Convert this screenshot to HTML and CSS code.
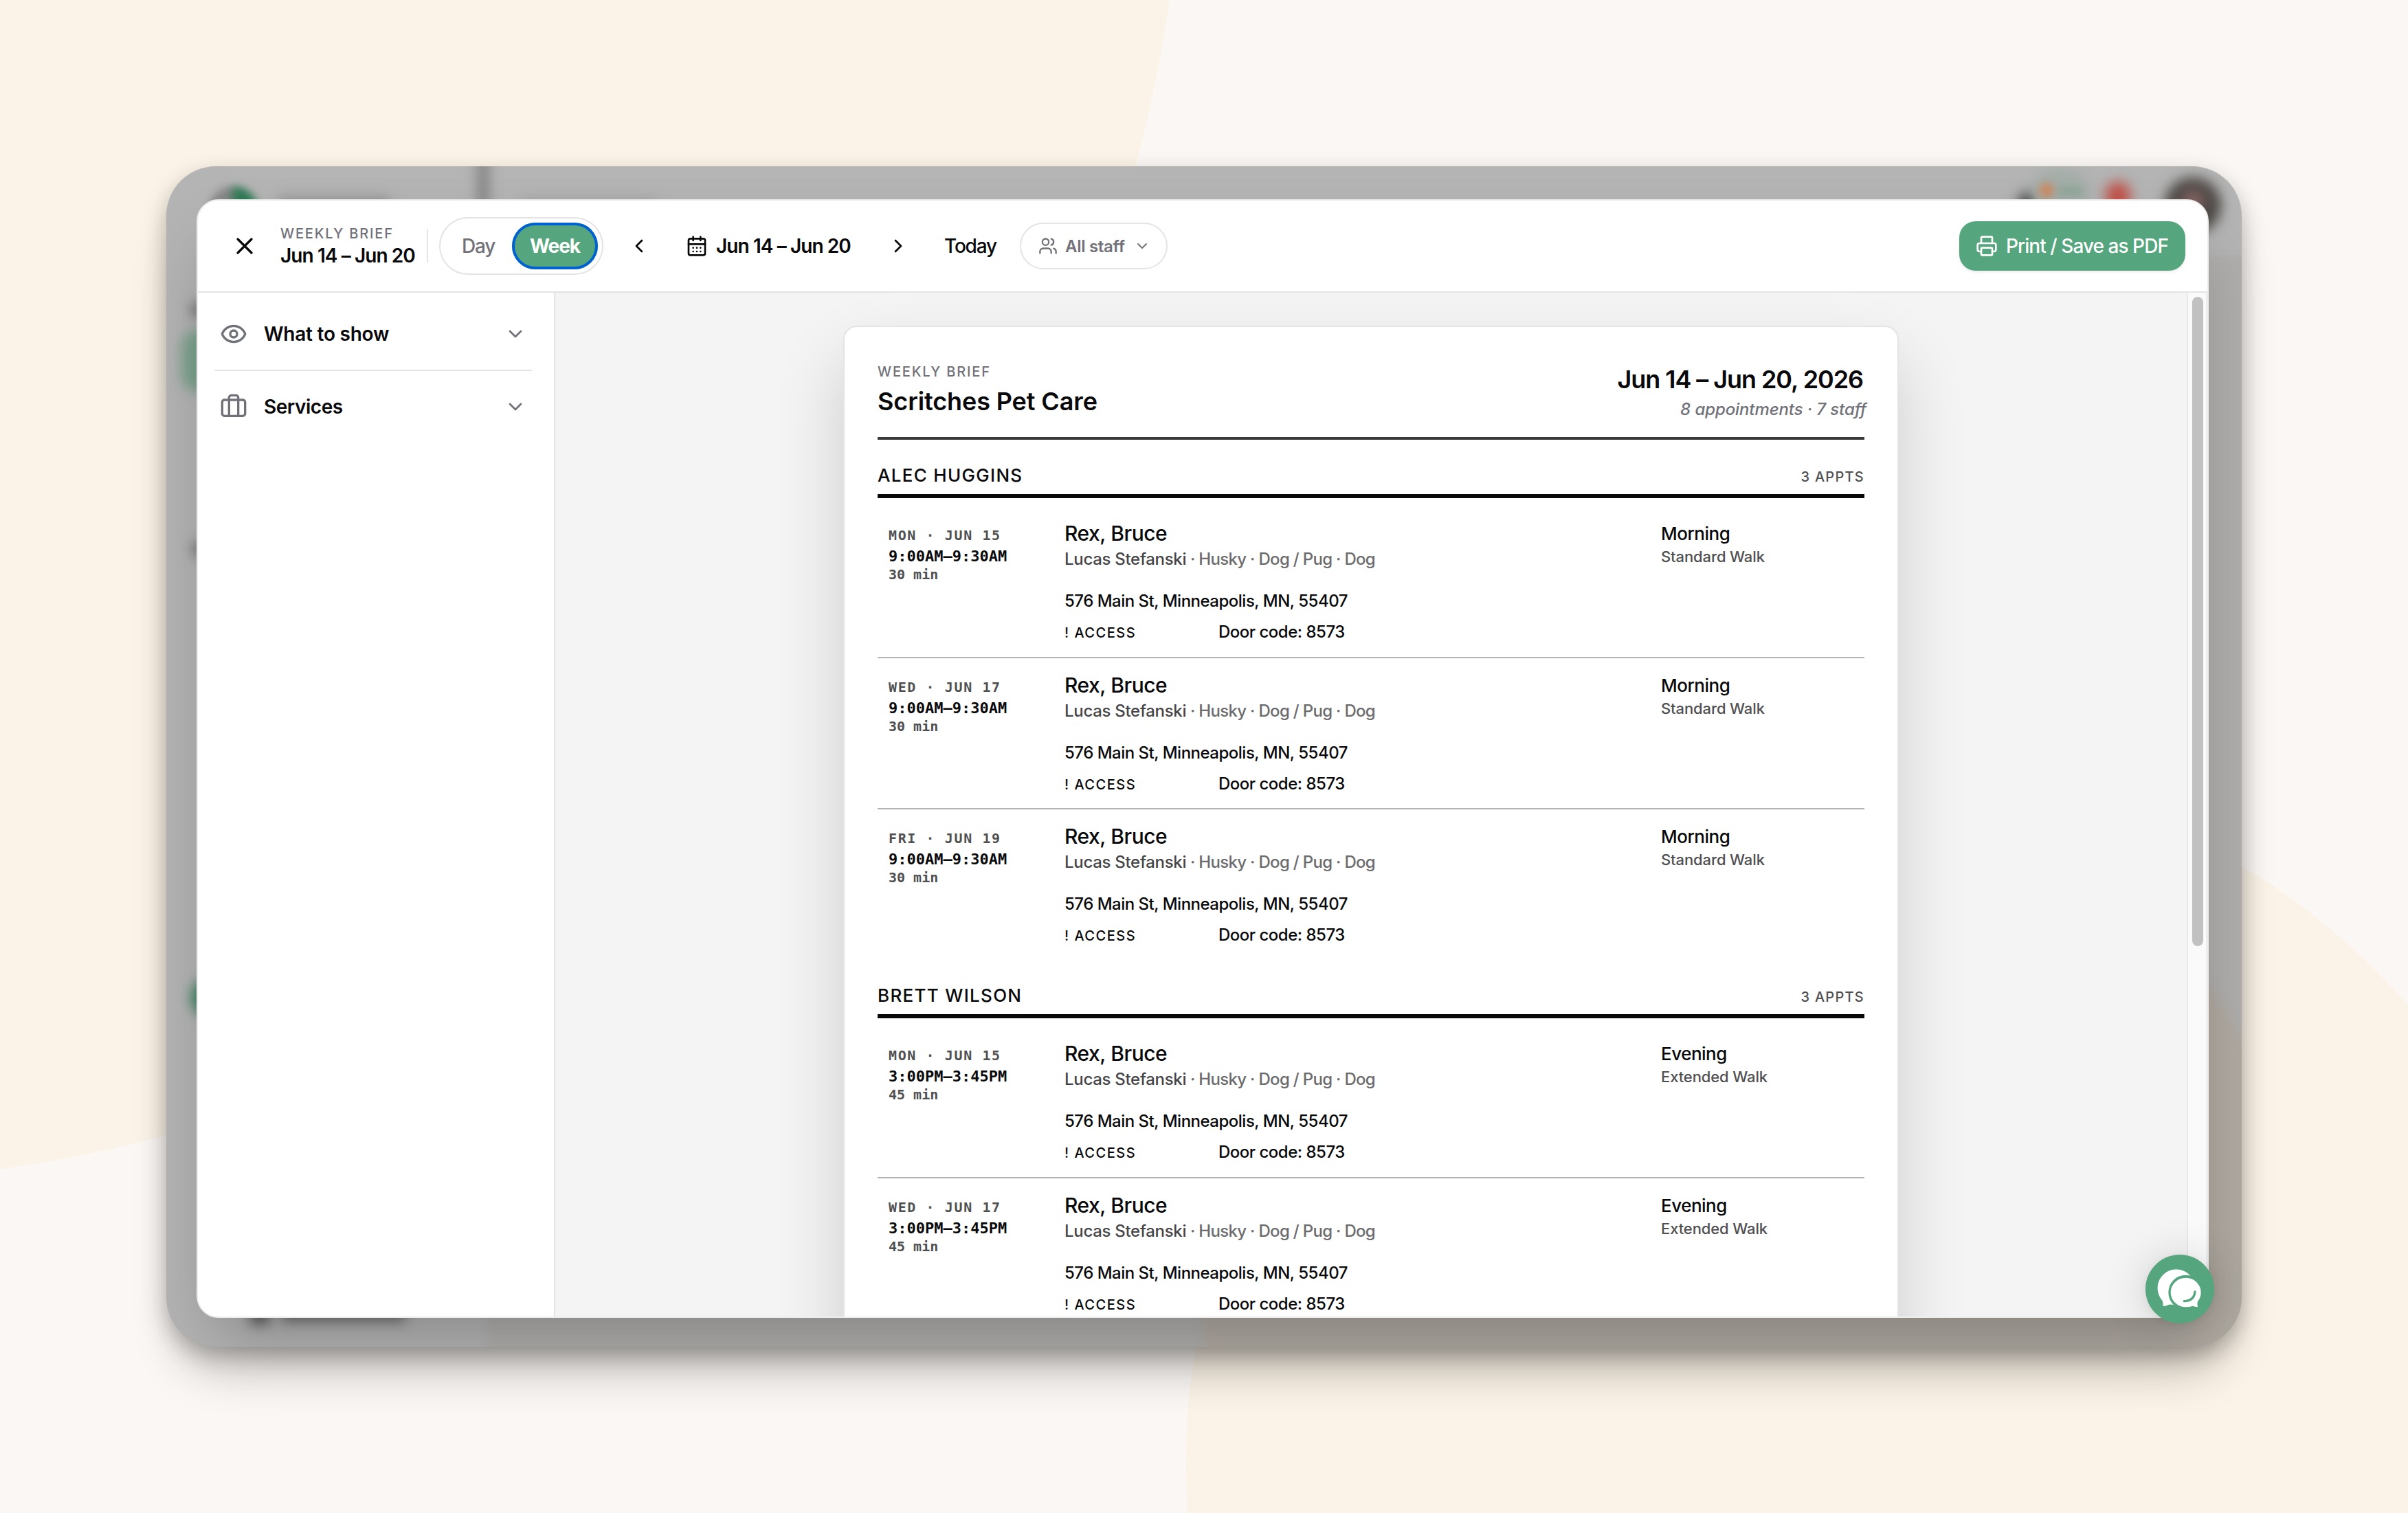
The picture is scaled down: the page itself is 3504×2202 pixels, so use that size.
FILE: index.html
```html
<!DOCTYPE html>
<html lang="en">
<head>
<meta charset="utf-8">
<title>Weekly Brief</title>
<link rel="stylesheet" href="styles.css">
</head>
<body>
<svg class="backdrop" viewBox="0 0 3504 2202" aria-hidden="true">
  <circle cx="-277" cy="-277" r="1998"/>
  <circle cx="2740" cy="2130" r="1014.5"/>
</svg>
<div class="frame">
  <div class="behind" aria-hidden="true">
    <i class="b-main"></i><i class="b-circle"></i><i class="b-rule"></i>
    <i class="b-logo"></i><i class="b-brand"></i><i class="b-crumb"></i>
    <i class="b-bell"></i><i class="b-pill"></i><i class="b-orange"></i><i class="b-pilltext"></i><i class="b-red"></i><i class="b-avatar"></i>
    <i class="b-nav1"></i><i class="b-navactive"></i><i class="b-nav2"></i><i class="b-navgreen"></i>
    <i class="b-foot1"></i><i class="b-foot2"></i>
  </div>
  <section class="modal">
    <header class="toolbar">
      <svg class="icon i40 close" viewBox="0 0 24 24"><path d="M18 6 6 18M6 6l12 12"/></svg>
      <div class="heading">
        <div class="kicker">WEEKLY BRIEF</div>
        <div class="range">Jun 14 – Jun 20</div>
      </div>
      <div class="segmented">
        <span class="seg day">Day</span>
        <span class="seg week">Week</span>
      </div>
      <svg class="icon i32 prev" viewBox="0 0 24 24"><path d="m15 18-6-6 6-6"/></svg>
      <div class="picker">
        <svg class="icon i32" viewBox="0 0 24 24"><path d="M8 2v4M16 2v4"/><rect width="18" height="18" x="3" y="4" rx="2"/><path d="M3 10h18M8 14h.01M12 14h.01M16 14h.01M8 18h.01M12 18h.01M16 18h.01"/></svg>
        <span class="range">Jun 14 – Jun 20</span>
      </div>
      <svg class="icon i32 next" viewBox="0 0 24 24"><path d="m9 18 6-6-6-6"/></svg>
      <span class="today">Today</span>
      <div class="staff">
        <svg class="icon i28" viewBox="0 0 24 24"><path d="M16 21v-2a4 4 0 0 0-4-4H6a4 4 0 0 0-4 4v2"/><circle cx="9" cy="7" r="4"/><path d="M22 21v-2a4 4 0 0 0-3-3.87M16 3.13a4 4 0 0 1 0 7.75"/></svg>
        <span class="staff-label">All staff</span>
        <svg class="icon i24" viewBox="0 0 24 24"><path d="m6 9 6 6 6-6"/></svg>
      </div>
      <div class="print">
        <svg class="icon i32" viewBox="0 0 24 24"><path d="M6 18H4a2 2 0 0 1-2-2v-5a2 2 0 0 1 2-2h16a2 2 0 0 1 2 2v5a2 2 0 0 1-2 2h-2"/><path d="M6 9V3a1 1 0 0 1 1-1h10a1 1 0 0 1 1 1v6"/><rect x="6" y="14" width="12" height="8" rx="1"/></svg>
        <span>Print / Save as PDF</span>
      </div>
    </header>
    <div class="body">
      <aside class="sidebar">
        <div class="option">
          <svg class="icon i40" viewBox="0 0 24 24"><path d="M2.062 12.348a1 1 0 0 1 0-.696 10.75 10.75 0 0 1 19.876 0 1 1 0 0 1 0 .696 10.75 10.75 0 0 1-19.876 0"/><circle cx="12" cy="12" r="3"/></svg>
          <span class="show-label">What to show</span>
          <svg class="icon i32" viewBox="0 0 24 24"><path d="m6 9 6 6 6-6"/></svg>
        </div>
        <div class="option">
          <svg class="icon i40" viewBox="0 0 24 24"><path d="M16 20V4a2 2 0 0 0-2-2h-4a2 2 0 0 0-2 2v16"/><rect width="20" height="14" x="2" y="6" rx="2"/></svg>
          <span class="services-label">Services</span>
          <svg class="icon i32" viewBox="0 0 24 24"><path d="m6 9 6 6 6-6"/></svg>
        </div>
      </aside>
      <main class="preview">
        <article class="sheet">
          <header class="sheet-head">
            <div>
              <div class="kicker sheet-kicker">WEEKLY BRIEF</div>
              <h1>Scritches Pet Care</h1>
            </div>
            <div class="sheet-meta">
              <div class="sheet-date">Jun 14 – Jun 20, 2026</div>
              <div class="sheet-count">8 appointments · 7 staff</div>
            </div>
          </header>

          <section class="group">
            <div class="group-head"><h2>ALEC HUGGINS</h2><span>3 APPTS</span></div>
            <div class="visit">
              <div class="when"><div class="date">MON · JUN 15</div><div class="time">9:00AM–9:30AM</div><div class="length">30 min</div></div>
              <div class="what"><div class="pets">Rex, Bruce</div><div class="owner"><b>Lucas Stefanski</b> · Husky · Dog / Pug · Dog</div><div class="address">576 Main St, Minneapolis, MN, 55407</div><div class="access"><span>! ACCESS</span><em>Door code: 8573</em></div></div>
              <div class="service"><div class="slot">Morning</div><div class="type">Standard Walk</div></div>
            </div>
            <div class="visit">
              <div class="when"><div class="date">WED · JUN 17</div><div class="time">9:00AM–9:30AM</div><div class="length">30 min</div></div>
              <div class="what"><div class="pets">Rex, Bruce</div><div class="owner"><b>Lucas Stefanski</b> · Husky · Dog / Pug · Dog</div><div class="address">576 Main St, Minneapolis, MN, 55407</div><div class="access"><span>! ACCESS</span><em>Door code: 8573</em></div></div>
              <div class="service"><div class="slot">Morning</div><div class="type">Standard Walk</div></div>
            </div>
            <div class="visit">
              <div class="when"><div class="date">FRI · JUN 19</div><div class="time">9:00AM–9:30AM</div><div class="length">30 min</div></div>
              <div class="what"><div class="pets">Rex, Bruce</div><div class="owner"><b>Lucas Stefanski</b> · Husky · Dog / Pug · Dog</div><div class="address">576 Main St, Minneapolis, MN, 55407</div><div class="access"><span>! ACCESS</span><em>Door code: 8573</em></div></div>
              <div class="service"><div class="slot">Morning</div><div class="type">Standard Walk</div></div>
            </div>
          </section>

          <section class="group">
            <div class="group-head"><h2>BRETT WILSON</h2><span>3 APPTS</span></div>
            <div class="visit">
              <div class="when"><div class="date">MON · JUN 15</div><div class="time">3:00PM–3:45PM</div><div class="length">45 min</div></div>
              <div class="what"><div class="pets">Rex, Bruce</div><div class="owner"><b>Lucas Stefanski</b> · Husky · Dog / Pug · Dog</div><div class="address">576 Main St, Minneapolis, MN, 55407</div><div class="access"><span>! ACCESS</span><em>Door code: 8573</em></div></div>
              <div class="service"><div class="slot">Evening</div><div class="type">Extended Walk</div></div>
            </div>
            <div class="visit">
              <div class="when"><div class="date">WED · JUN 17</div><div class="time">3:00PM–3:45PM</div><div class="length">45 min</div></div>
              <div class="what"><div class="pets">Rex, Bruce</div><div class="owner"><b>Lucas Stefanski</b> · Husky · Dog / Pug · Dog</div><div class="address">576 Main St, Minneapolis, MN, 55407</div><div class="access"><span>! ACCESS</span><em>Door code: 8573</em></div></div>
              <div class="service"><div class="slot">Evening</div><div class="type">Extended Walk</div></div>
            </div>
          </section>
        </article>
      </main>
      <div class="scrollbar"><div class="thumb"></div></div>
    </div>
  </section>
  <div class="chat">
    <svg viewBox="0 0 300 300">
      <path fill="#fff" d="M196 92A81 81 0 1 0 73 200Q78 207 76 224Q88 226 98 220Q108 215 126 220Z"/>
      <circle cx="176" cy="165" r="76" fill="#55a67e"/>
      <path fill="#fff" d="M228 205Q225 211 228 229Q216 227 206 224Q193 229 176 229A66 64 0 1 1 242 165Q242 187 228 205Z"/>
      <path fill="none" stroke="#55a67e" stroke-width="10" stroke-linecap="round" d="M169 203Q212 202 216 162"/>
    </svg>
  </div>
</div>
</body>
</html>
```
FILE: styles.css
```css
* { box-sizing: border-box; margin: 0; padding: 0; }

body {
  width: 3504px;
  height: 2202px;
  overflow: hidden;
  padding: 242px;
  background: #fbf7f4;
  color: #09090b;
  font-family: Inter, "Liberation Sans", sans-serif;
  font-size: 28px;
}

.backdrop { position: absolute; inset: 0; width: 3504px; height: 2202px; fill: #fbf3e7; }

.icon { display: block; flex: none; fill: none; stroke: currentColor; stroke-width: 2; stroke-linecap: round; stroke-linejoin: round; }
.i24 { width: 24px; height: 24px; }
.i28 { width: 28px; height: 28px; }
.i32 { width: 32px; height: 32px; }
.i40 { width: 40px; height: 40px; }

.frame {
  position: relative;
  width: 3020px;
  height: 1718px;
  padding: 48px 48px 42px 44px;
  border-radius: 72px;
  background: #b4b4b4;
  box-shadow: 0 12px 32px rgba(0, 0, 0, .25), 0 50px 70px -20px rgba(0, 0, 0, .2);
}

/* Dimmed, out-of-focus application under the dialog */
.behind { position: absolute; inset: 0; overflow: hidden; border-radius: 72px; }
.behind i { position: absolute; display: block; filter: blur(9px); }
.behind .b-main { left: 466px; top: 130px; right: -40px; bottom: -40px; background: rgba(150, 138, 130, .13); filter: blur(5px); }
.behind .b-circle { left: 1508px; top: 853px; width: 1616px; height: 1616px; border-radius: 50%; background: rgba(180, 145, 100, .16); filter: blur(8px); }
.b-rule { left: 453px; top: -20px; width: 16px; height: 90px; background: #808080; }
.behind .b-logo { left: 62px; top: 29px; width: 72px; height: 72px; border-radius: 50%; background: linear-gradient(90deg, #868686 40%, #2f7a55 55%); filter: blur(6px); }
.b-brand { left: 164px; top: 46px; width: 160px; height: 22px; background: #8c8c8c; }
.b-crumb { left: 520px; top: 49px; width: 190px; height: 16px; background: #9d9d9d; }
.b-bell { left: 2694px; top: 38px; width: 34px; height: 34px; border-radius: 50%; background: #444; }
.b-pill { left: 2714px; top: 2px; width: 84px; height: 70px; border-radius: 35px; background: #a4aea9; }
.behind .b-orange { left: 2725px; top: 24px; width: 22px; height: 22px; border-radius: 50%; background: #cb8a63; filter: blur(6px); }
.behind .b-pilltext { left: 2754px; top: 30px; width: 34px; height: 12px; background: #8ea597; filter: blur(6px); }
.b-red { left: 2822px; top: 22px; width: 36px; height: 44px; border-radius: 18px; background: #c0534b; }
.b-avatar { left: 2908px; top: 16px; width: 82px; height: 82px; border-radius: 50%; background: radial-gradient(circle at 50% 42%, #8f6a68 10%, #4b4744 36%); }
.b-nav1 { left: 36px; top: 200px; width: 24px; height: 18px; background: #707070; }
.b-navactive { left: 22px; top: 238px; width: 80px; height: 90px; border-radius: 24px; background: #7ba18c; }
.b-nav2 { left: 38px; top: 548px; width: 20px; height: 18px; background: #707070; }
.b-navgreen { left: 36px; top: 1180px; width: 60px; height: 60px; border-radius: 50%; background: #3c8060; }
.b-foot1 { left: 122px; top: 1650px; width: 28px; height: 36px; background: #606060; }
.b-foot2 { left: 168px; top: 1650px; width: 180px; height: 32px; background: #707070; }

.modal {
  position: relative;
  display: flex;
  flex-direction: column;
  width: 2928px;
  height: 1628px;
  overflow: hidden;
  border: 2px solid #ededee;
  border-radius: 32px;
  background: #fff;
  box-shadow: 0 50px 100px -24px rgba(0, 0, 0, .25);
}

/* Toolbar */
.toolbar { display: flex; align-items: center; flex: none; height: 134px; padding: 0 32px 0 48px; border-bottom: 2px solid #e4e4e5; }
.heading { display: flex; flex-direction: column; width: 215px; height: 48px; margin-left: 32px; justify-content: center; border-right: 2px solid #e4e4e5; white-space: nowrap; }
.kicker { color: #71717a; font-size: 20px; font-weight: 500; line-height: 28px; letter-spacing: 1.83px; }
.range { font-weight: 600; line-height: 36px; letter-spacing: -.92px; white-space: nowrap; }
.segmented { display: flex; align-items: center; width: 239px; height: 84px; margin-left: 16px; padding: 0 6px; border: 2px solid #e4e4e5; border-radius: 42px; }
.seg { display: flex; align-items: center; height: 68px; border-radius: 34px; }
.day { width: 98px; padding-left: 25px; color: #71717a; font-weight: 500; letter-spacing: -1.2px; }
.week { justify-content: center; width: 125px; background: #55a67e; color: #fff; font-weight: 700; letter-spacing: -1.1px; box-shadow: inset 0 0 0 4px #0062d2; }
.prev { margin-left: 36px; }
.picker { display: flex; align-items: center; gap: 12px; width: 293px; margin-left: 52px; }
.today { width: 110px; margin-left: 51px; font-weight: 450; letter-spacing: -1.2px; }
.staff { display: flex; align-items: center; width: 215px; height: 68px; padding-left: 25px; border: 2px solid #e4e4e5; border-radius: 34px; color: #71717a; }
.staff-label { width: 100px; margin-left: 11px; font-size: 24px; font-weight: 600; letter-spacing: -.29px; }
.print { display: flex; align-items: center; gap: 12px; width: 329px; height: 72px; margin-left: auto; padding-left: 24px; border-radius: 24px; background: #55a67e; color: #fff; font-weight: 500; letter-spacing: -.95px; white-space: nowrap; box-shadow: 0 2px 4px rgba(0, 0, 0, .08); }

/* Sidebar */
.body { display: flex; flex: 1; min-height: 0; }
.sidebar { flex: none; width: 520px; padding: 8px 32px 0 24px; border-right: 2px solid #e4e4e5; }
.option { display: flex; align-items: center; height: 104px; padding: 0 8px; font-weight: 600; }
.option + .option { height: 106px; border-top: 2px solid #e4e4e5; }
.option .icon { color: #71717a; }
.option span { flex: 1; margin-left: 24px; }
.show-label { letter-spacing: -.24px; }
.services-label { letter-spacing: -.45px; }

/* Preview */
.preview { flex: 1; min-width: 0; height: 100%; overflow: hidden; padding-top: 48px; background: #f4f4f4; }
.sheet { width: 1536px; height: 2100px; margin: 0 auto; padding: 48px; border: 2px solid #e4e4e5; border-radius: 20px; background: #fff; box-shadow: 0 50px 100px rgba(0, 0, 0, .16); }
.sheet-head { display: flex; justify-content: space-between; height: 116px; border-bottom: 4px solid #3a3a3c; }
.sheet-kicker { padding-top: 1px; line-height: 32px; }
h1 { font-size: 36px; font-weight: 600; line-height: 54px; letter-spacing: -.12px; }
.sheet-meta { padding-top: 3px; text-align: right; }
.sheet-date { font-size: 36px; font-weight: 600; line-height: 50px; letter-spacing: -1.07px; margin-right: 2px; }
.sheet-count { color: #71717a; font-size: 24px; font-style: italic; font-weight: 500; line-height: 38px; letter-spacing: -.1px; margin-right: -3px; }

.group-head { display: flex; align-items: baseline; justify-content: space-between; height: 85px; padding-top: 32px; border-bottom: 6px solid #09090b; margin-bottom: 12px; }
h2 { font-size: 26px; font-weight: 550; line-height: 39px; letter-spacing: 1.3px; }
.group-head span { color: #505052; font-size: 20px; font-weight: 500; letter-spacing: 1.25px; }
.visit { display: grid; grid-template-columns: 272px 868px 1fr; height: 220.5px; padding-top: 18px; border-bottom: 2px solid #b4b4b5; white-space: nowrap; }
.visit:last-child { height: 219px; border-bottom: 0; }
.when { padding: 10px 0 0 16px; color: #505052; font-family: "DejaVu Sans Mono", monospace; font-size: 20px; font-weight: 700; }
.date { line-height: 28px; letter-spacing: 1.6px; }
.time { color: #09090b; font-size: 22px; line-height: 33px; }
.length { line-height: 20px; }
.pets { font-size: 30px; font-weight: 550; line-height: 42px; letter-spacing: -.45px; }
.owner, .address, .access em { font-size: 24px; font-weight: 500; line-height: 34px; letter-spacing: -.5px; }
.owner { color: #6c6c6e; letter-spacing: -.68px; }
.owner b { color: #464648; font-weight: 500; letter-spacing: -.3px; }
.address { margin-top: 27px; }
.access { display: flex; align-items: baseline; margin-top: 11px; }
.access span { width: 224px; font-size: 20px; font-weight: 500; letter-spacing: 1.5px; }
.access em { font-style: normal; }
.service { padding-top: 4px; }
.slot { font-size: 26px; font-weight: 550; line-height: 36px; letter-spacing: -.5px; }
.type { color: #505052; font-size: 22px; font-weight: 500; line-height: 31px; letter-spacing: -.12px; }

.scrollbar { flex: none; width: 30px; padding: 6px 4px 0 6px; border-left: 2px solid #e8e8e8; border-right: 2px solid #ededee; background: #fafafa; }
.thumb { width: 16px; height: 945px; border-radius: 8px; background: #c1c1c1; }

.chat { position: absolute; left: 2880px; top: 1584px; width: 100px; height: 100px; border-radius: 50%; background: #55a67e; box-shadow: 0 2px 12px rgba(0, 0, 0, .06), 0 4px 64px rgba(0, 0, 0, .16); }
.chat svg { display: block; width: 100px; height: 100px; }
```
